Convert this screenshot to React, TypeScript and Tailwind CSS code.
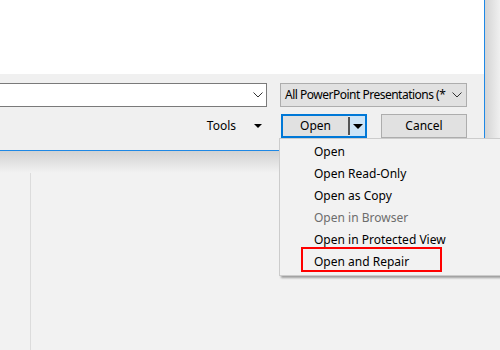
const items = [
  { label: "Open" },
  { label: "Open Read-Only" },
  { label: "Open as Copy" },
  { label: "Open in Browser", disabled: true },
  { label: "Open in Protected View" },
  { label: "Open and Repair", marked: true },
];

function Chevron() {
  return (
    <svg viewBox="0 0 10 6" className="w-[10px] h-[6px] shrink-0" fill="none" stroke="#333" strokeWidth="1">
      <polyline points="0.5 0.5 5 5 9.5 0.5" />
    </svg>
  );
}

function Caret({ big }: { big?: boolean }) {
  return big ? (
    <svg viewBox="0 0 10 5" className="w-[10px] h-[5px]">
      <polygon points="0 0 10 0 5 5" fill="#000" />
    </svg>
  ) : (
    <svg viewBox="0 0 8 4" className="w-[8px] h-[4px]">
      <polygon points="0 0 8 0 4 4" fill="#000" />
    </svg>
  );
}

export default function App() {
  return (
    <div
      className="relative w-[500px] h-[350px] overflow-hidden bg-[#f2f2f2] text-[12px] text-black"
      style={{ fontFamily: '"Noto Sans", "Open Sans", sans-serif' }}
    >
      {/* background pane divider */}
      <div className="absolute left-[30px] top-0 bottom-0 w-px bg-[#dcdcdc]" />
      {/* dialog shadow */}
      <div className="absolute left-0 top-[151px] w-[500px] h-[22px] bg-gradient-to-b from-[#d2d2d2] to-[#f2f2f2]" />
      <div className="absolute left-[485px] top-0 w-[15px] h-[151px] bg-gradient-to-r from-[#d4d4d4] to-[#f0f0f0]" />

      {/* dialog */}
      <div className="relative w-[485px] h-[151px] flex flex-col bg-[#f0f0f0] border-r border-b border-[#1e88e5]">
        <div className="h-[74px] bg-white" />
        <div className="flex flex-col pt-[9px] pr-[17px] gap-[7px]">
          <div className="flex items-center gap-[13px]">
            <div className="flex-1 h-[24px] bg-white border border-[#7a7a7a] border-l-0 flex items-center justify-end pr-[3px]">
              <Chevron />
            </div>
            <div className="w-[187px] h-[24px] bg-[#e1e1e1] border border-[#adadad] flex items-center justify-between pl-[4px] pr-[4px]">
              <span className="whitespace-nowrap tracking-[-0.5px]">All PowerPoint Presentations (*</span>
              <Chevron />
            </div>
          </div>
          <div className="flex items-center justify-end">
            <div className="flex items-center mr-[19px]">
              <span>Tools</span>
              <span className="ml-[18px] flex"><Caret /></span>
            </div>
            <div className="w-[86px] h-[24px] border-2 border-[#0078d7] flex">
              <div className="flex-1 bg-[#e1e1e1] flex items-center justify-center">Open</div>
              <div className="w-[2px] bg-[#555] my-[1px]" />
              <div className="w-[15px] bg-[#cce4f7] flex items-center justify-center"><Caret big /></div>
            </div>
            <div className="ml-[14px] w-[86px] h-[24px] bg-[#e1e1e1] border border-[#adadad] flex items-center justify-center">
              Cancel
            </div>
          </div>
        </div>
      </div>

      {/* split button menu */}
      <div className="absolute left-[279px] top-[138px] w-[240px] h-[138px] bg-[#f2f2f2] border border-[#cccccc] shadow-[2px_2px_2px_rgba(0,0,0,0.35)] py-[2px] flex flex-col">
        {items.map((it) => (
          <div
            key={it.label}
            className={`relative h-[22px] flex items-center pl-[34px] whitespace-nowrap ${it.disabled ? "text-[#6d6d6d]" : "text-black"}`}
          >
            {it.marked && (
              <div className="absolute left-[21px] top-[-4px] w-[141px] h-[25px] border-2 border-[#ff0000]" />
            )}
            <span className="relative">{it.label}</span>
          </div>
        ))}
      </div>
    </div>
  );
}
